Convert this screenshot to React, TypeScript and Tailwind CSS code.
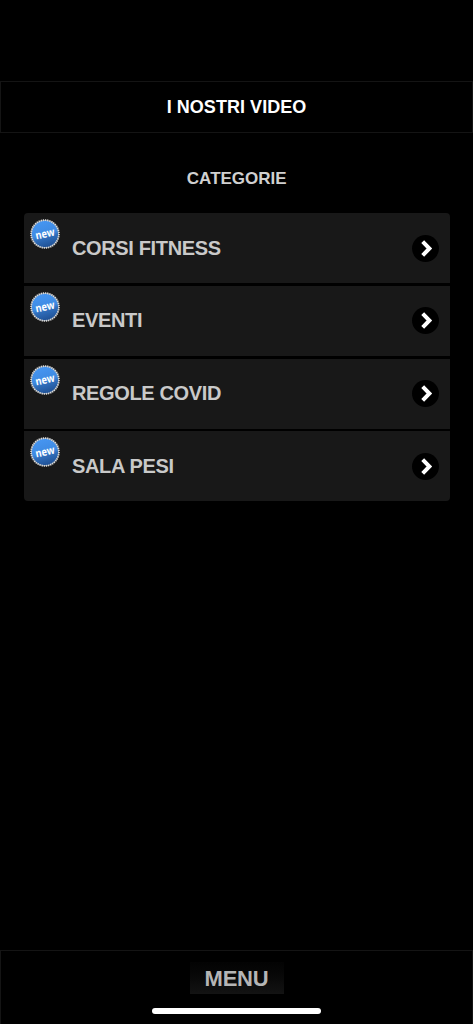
interface Category {
  id: number;
  name: string;
}

const categories: Category[] = [
  { id: 1, name: "CORSI FITNESS" },
  { id: 2, name: "EVENTI" },
  { id: 3, name: "REGOLE COVID" },
  { id: 4, name: "SALA PESI" },
];

const NewBadge = ({ id }: { id: number }) => {
  return (
    <svg viewBox="0 0 30 30" className="h-[30px] w-[30px] shrink-0">
      <defs>
        <linearGradient id={`badge-${id}`} x1="0.35" y1="0" x2="0.65" y2="1">
          <stop offset="0" stopColor="#4696f2" />
          <stop offset="0.5" stopColor="#3e8ae2" />
          <stop offset="0.65" stopColor="#2f6dba" />
          <stop offset="1" stopColor="#1f4f92" />
        </linearGradient>
      </defs>
      <circle cx="15" cy="15" r="14" fill="#8d9aa8" />
      <circle cx="15" cy="15" r="13.2" fill={`url(#badge-${id})`} />
      <circle
        cx="15"
        cy="15"
        r="13.9"
        fill="none"
        stroke="#d6d6d6"
        strokeWidth="1.8"
        pathLength="80"
        strokeDasharray="1.2 0.8"
      />
      <text
        x="15"
        y="18.5"
        textAnchor="middle"
        textLength="19.5"
        lengthAdjust="spacingAndGlyphs"
        transform="rotate(-12 15 15)"
        fill="#fff"
        className="font-['Open_Sans',sans-serif] text-[11px] font-bold"
      >
        new
      </text>
    </svg>
  );
};

const Arrow = () => {
  return (
    <svg viewBox="0 0 27 27" className="h-[27px] w-[27px] shrink-0">
      <circle cx="13.5" cy="13.5" r="13.5" fill="#000" />
      <path
        d="M10.7 6.6 L17.4 13.5 L10.7 20.4"
        fill="none"
        stroke="#fff"
        strokeWidth="4"
      />
    </svg>
  );
};

function App() {
  return (
    <main className="flex h-screen w-full flex-col overflow-hidden bg-black pt-[81px] font-['Liberation_Sans',Arial,sans-serif] font-bold">
      <header className="flex h-[52px] shrink-0 items-center justify-center border border-[#141414] text-white">
        <h1 className="text-[18px] leading-none tracking-[0.05px]">
          I NOSTRI VIDEO
        </h1>
      </header>

      <section className="flex flex-1 flex-col pr-[23.5px] pl-6">
        <h2 className="mt-9 text-center text-[17px] leading-5 text-[#d0d0d0]">
          CATEGORIE
        </h2>
        <ul className="mt-6 flex flex-col gap-[2.8px] overflow-hidden rounded-[4px]">
          {categories.map((category) => {
            return (
              <li
                key={category.id}
                className="flex h-[70px] items-center bg-[#181818] pr-[10.5px] pl-[6px]"
              >
                <div className="self-start pt-[6px]">
                  <NewBadge id={category.id} />
                </div>
                <span className="ml-3 flex-1 pb-px text-[20px] leading-6 tracking-[-0.36px] text-[#c9c9c9]">
                  {category.name}
                </span>
                <Arrow />
              </li>
            );
          })}
        </ul>
      </section>

      <footer className="flex h-[74px] shrink-0 flex-col items-center border-x border-t border-[#141414] pt-[11px]">
        <button className="h-8 w-[94px] bg-linear-to-b from-[#030303] to-[#131313] pt-px text-[22px] leading-8 tracking-[-0.2px] text-[#b5b5b5]">
          MENU
        </button>
        <div className="mt-[14px] h-[6px] w-[169px] rounded-full bg-white" />
      </footer>
    </main>
  );
}

export default App;
